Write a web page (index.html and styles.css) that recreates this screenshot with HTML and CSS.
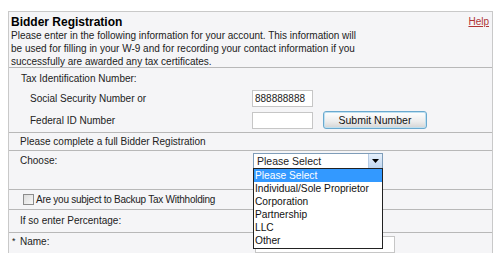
FILE: index.html
```html
<!DOCTYPE html>
<html lang="en">
<head>
    <meta charset="UTF-8">
    <title>Bidder Registration</title>
    <link rel="stylesheet" href="styles.css">
</head>
<body>

    <div class="panel">
        <div class="panel-head">
            <a class="help" href="#">Help</a>
            <h1>Bidder Registration</h1>
            <p>Please enter in the following information for your account. This information will<br>
            be used for filling in your W-9 and for recording your contact information if you<br>
            successfully are awarded any tax certificates.</p>
        </div>

        <div class="tax-block">
            <div class="tax-title">Tax Identification Number:</div>
            <div class="tax-row first">
                <label class="tax-label" for="ssn">Social Security Number or</label>
                <input type="text" id="ssn" class="field" value="888888888">
            </div>
            <div class="tax-row">
                <label class="tax-label" for="fein">Federal ID Number</label>
                <input type="text" id="fein" class="field">
                <button type="button" class="submit-button">Submit Number</button>
            </div>
        </div>

        <div class="row row-complete">Please complete a full Bidder Registration</div>

        <div class="row row-choose">
            <div class="row-label">Choose:</div>
            <div class="select-wrap">
                <div class="select-box">
                    <span>Please Select</span>
                    <span class="select-arrow">
                        <svg width="7" height="4" viewBox="0 0 7 4"><path d="M0 0h7L3.5 4z" fill="#000"/></svg>
                    </span>
                </div>
                <ul class="select-list">
                    <li class="selected">Please Select</li>
                    <li>Individual/Sole Proprietor</li>
                    <li>Corporation</li>
                    <li>Partnership</li>
                    <li>LLC</li>
                    <li>Other</li>
                </ul>
            </div>
        </div>

        <div class="row row-check">
            <span class="checkbox"></span>
            <span class="check-text">Are you subject to Backup Tax Withholding</span>
        </div>

        <div class="row row-percent">If so enter Percentage:</div>

        <div class="row row-name">
            <div class="row-label"><span class="req">*</span>Name:</div>
            <input type="text" class="field name-field">
        </div>
    </div>

</body>
</html>
```

FILE: styles.css
```css
body {
    font-family: "Liberation Sans", Arial, sans-serif;
    font-size: 10px;
    color: #222;
    background-color: #fff;
    margin: 0;
    padding: 0;
}

.panel {
    margin: 11px 0 0 8px;
    width: 485px;
    height: 243px;
    box-sizing: border-box;
    border: 1px solid #c9c9c9;
    background-color: #f5f5f7;
}

.panel-head {
    padding: 3px 2px 0 2px;
    height: 55px;
    box-sizing: border-box;
}

.panel-head h1 {
    font-size: 12px;
    font-weight: bold;
    color: #000;
    margin: 0;
    line-height: 14px;
}

.panel-head p {
    margin: 0;
    font-size: 10px;
    line-height: 13px;
    white-space: nowrap;
}

.help {
    float: right;
    margin: 1px 1px 0 0;
    color: #b03434;
    font-size: 10px;
}

.tax-block {
    border-top: 1px solid #b8b8b8;
    height: 65px;
    box-sizing: border-box;
}

.tax-title {
    height: 19px;
    line-height: 19px;
    padding-left: 12px;
    padding-top: 1px;
}

.tax-row {
    display: flex;
    align-items: center;
    height: 18px;
    margin-top: 4px;
}

.tax-row.first {
    margin-top: 1px;
}

.tax-label {
    flex: 0 0 243px;
    box-sizing: border-box;
    padding-left: 21px;
}

.field {
    width: 61px;
    height: 17px;
    box-sizing: border-box;
    border: 1px solid #c6c6c6;
    background-color: #fff;
    font-family: "Liberation Sans", Arial, sans-serif;
    font-size: 10px;
    padding: 0 2px;
    margin: 0;
    color: #222;
}

.submit-button {
    margin-left: 10px;
    width: 104px;
    height: 18px;
    border: 1px solid #6aa9cf;
    border-radius: 3px;
    background: linear-gradient(#ffffff, #ececec 60%, #d4d4d4);
    font-family: "Liberation Sans", Arial, sans-serif;
    font-size: 10.5px;
    color: #111;
    padding: 0;
    box-shadow: inset 0 0 0 1px #bfe0f0;
}

.row {
    border-top: 1px solid #b8b8b8;
    padding-left: 11px;
    box-sizing: border-box;
}

.row-complete {
    height: 18px;
    line-height: 17px;
}

.row-choose {
    height: 39px;
    display: flex;
    align-items: flex-start;
    padding-left: 0;
}

.row-label {
    flex: 0 0 244px;
    box-sizing: border-box;
    padding-left: 11px;
    line-height: 15px;
    padding-top: 2px;
}

.select-wrap {
    position: relative;
    margin-top: 2px;
}

.select-box {
    width: 130px;
    height: 16px;
    box-sizing: border-box;
    border: 1px solid #7f9db9;
    background-color: #fff;
    display: flex;
    align-items: center;
    justify-content: space-between;
    padding-left: 3px;
    font-size: 10.5px;
}

.select-arrow {
    width: 13px;
    height: 14px;
    display: flex;
    align-items: center;
    justify-content: center;
    background: linear-gradient(#e6f0fb, #c2d7f0);
    border-left: 1px solid #b6cbe4;
}

.select-list {
    position: absolute;
    top: 15px;
    left: 0;
    width: 130px;
    box-sizing: border-box;
    margin: 0;
    padding: 0 0 1px 0;
    list-style: none;
    background-color: #fff;
    border: 1px solid #222;
    font-size: 10.2px;
    z-index: 2;
}

.select-list li {
    height: 13px;
    line-height: 13px;
    padding-left: 1px;
    color: #111;
    white-space: nowrap;
}

.select-list li.selected {
    background-color: #3399ff;
    color: #fff;
}

.row-check {
    height: 20px;
    display: flex;
    align-items: center;
    padding-left: 14px;
}

.check-text {
    letter-spacing: -0.25px;
}

.checkbox {
    width: 9px;
    height: 9px;
    border: 1px solid #8c8c8c;
    background: linear-gradient(135deg, #dcdcdc, #f8f8f8);
    margin-right: 2px;
}

.row-percent {
    height: 23px;
    line-height: 21px;
}

.row-name {
    height: 30px;
    display: flex;
    align-items: flex-start;
    padding-left: 0;
}

.row-name .row-label {
    flex-basis: 246px;
    padding-left: 3px;
    padding-top: 1px;
}

.req {
    display: inline-block;
    width: 8px;
    font-size: 9px;
    vertical-align: top;
}

.name-field {
    width: 140px;
    margin-top: 3px;
}
```
